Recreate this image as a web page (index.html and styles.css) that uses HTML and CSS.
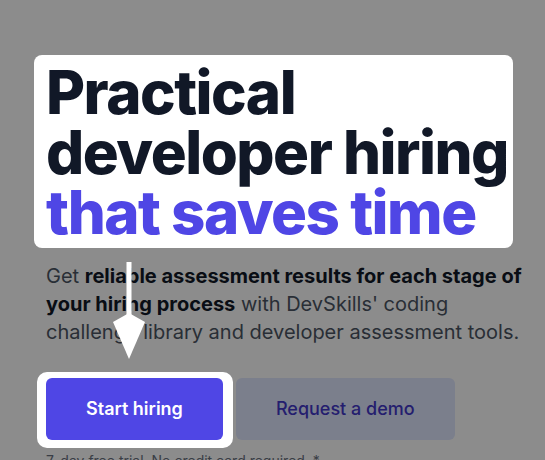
FILE: index.html
```html
<!DOCTYPE html>
<html lang="en">
<head>
    <meta charset="UTF-8">
    <meta name="viewport" content="width=device-width, initial-scale=1.0">
    <title>DevSkills - Practical developer hiring</title>

    <link rel="stylesheet" href="styles.css">
</head>
<body>

    <div class="overlay"></div>

    <main class="hero">
        <h1 class="headline">Practical developer hiring <span class="accent">that saves time</span></h1>

        <p class="lead">Get <strong>reliable assessment results for each stage of your hiring process</strong> with DevSkills' coding challenge library and developer assessment tools.</p>

        <div class="actions">
            <div class="spotlight">
                <a class="btn btn-primary" href="#">Start hiring</a>
            </div>
            <a class="btn btn-secondary" href="#">Request a demo</a>
        </div>

        <p class="note">7-day free trial. No credit card required. *</p>

        <!-- tour pointer from the headline down to the CTA -->
        <svg class="tour-arrow" width="34" height="98" viewBox="0 0 34 98">
            <rect x="14.5" y="0" width="5" height="56" fill="#fff"/>
            <polygon points="17,51 33,60 17,97 1,60" fill="#fff"/>
        </svg>
    </main>

</body>
</html>
```

FILE: styles.css
```css
body {
    font-family: Inter, "Noto Sans", Arial, sans-serif;
    background-color: #fff;
    color: #111827;
    margin: 0;
    padding: 0;
}

.overlay {
    position: fixed;
    inset: 0;
    background-color: rgba(0, 0, 0, 0.45);
    z-index: 10;
}

.hero {
    position: relative;
    padding: 62px 16px 0 46px;
}

.headline {
    position: relative;
    z-index: 20;
    width: 467px;
    margin: -7px 0 0 -12px;
    padding: 7px 0 6px 12px;
    background-color: #fff;
    border-radius: 8px;
    font-size: 60px;
    line-height: 60px;
    font-weight: 800;
    letter-spacing: -0.025em;
    color: #111827;
}

.headline .accent {
    display: block;
    color: #4f46e5;
}

.lead {
    max-width: 480px;
    margin: 14px 0 0;
    font-size: 20px;
    line-height: 28px;
    color: #4b5563;
}

.lead strong {
    font-weight: 700;
    color: #111827;
}

.actions {
    display: flex;
    align-items: center;
    gap: 13px;
    margin-top: 32px;
}

.spotlight {
    position: relative;
    z-index: 20;
    display: flex;
    margin: -6px -10px -8px -9px;
    padding: 6px 10px 8px 9px;
    background-color: #fff;
    border-radius: 10px;
}

.btn {
    display: inline-block;
    padding: 17px 40px;
    font-size: 18px;
    line-height: 28px;
    border-radius: 6px;
    text-decoration: none;
}

.btn-primary {
    background-color: #4f46e5;
    color: #fff;
    font-weight: 600;
}

.btn-secondary {
    background-color: #e0e7ff;
    color: #4338ca;
    font-weight: 500;
}

.note {
    margin: 11px 0 0;
    font-size: 14px;
    line-height: 20px;
    color: #6b7280;
}

.tour-arrow {
    position: absolute;
    left: 112px;
    top: 262px;
    z-index: 30;
}
```
